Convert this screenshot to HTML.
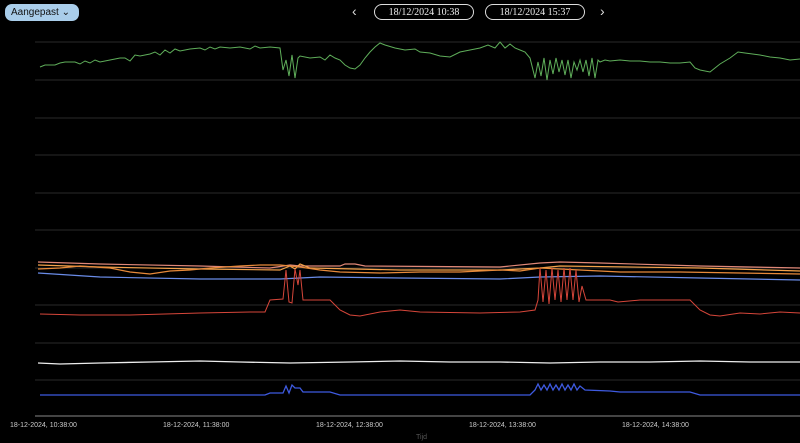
<!DOCTYPE html>
<html><head><meta charset="utf-8"><style>
body{margin:0;width:800px;height:443px;background:#000;overflow:hidden;font-family:"Liberation Sans",sans-serif;position:relative}
.btn{position:absolute;top:4px;left:5px;width:74px;height:17px;background:#a9cdea;border-radius:7px;font-size:10px;color:#111;line-height:17px;padding-left:6px;box-sizing:border-box}
.d{position:absolute;top:4px;height:16px;border:1.5px solid #ddd;border-radius:9px;color:#eee;font-family:"Liberation Serif",serif;font-size:10px;text-align:center;line-height:16px;box-sizing:border-box}
.ar{position:absolute;top:3px;color:#ddd;font-size:14px}
.x{position:absolute;top:422px;font-size:7px;color:#ccc}
</style></head><body>
<div class="btn">Aangepast &#8964;</div>
<div class="ar" style="left:352px">&#8249;</div>
<div class="d" style="left:374px;width:100px">18/12/2024 10:38</div>
<div class="d" style="left:485px;width:100px">18/12/2024 15:37</div>
<div class="ar" style="left:600px">&#8250;</div>
<svg width="800" height="443" style="position:absolute;left:0;top:0" fill="none">
<g stroke="#2a2a2a" stroke-width="1">
<line x1="35" y1="42" x2="800" y2="42"/><line x1="35" y1="80" x2="800" y2="80"/><line x1="35" y1="118" x2="800" y2="118"/><line x1="35" y1="155" x2="800" y2="155"/><line x1="35" y1="193" x2="800" y2="193"/><line x1="35" y1="230" x2="800" y2="230"/><line x1="35" y1="268" x2="800" y2="268"/><line x1="35" y1="305" x2="800" y2="305"/><line x1="35" y1="343" x2="800" y2="343"/><line x1="35" y1="380" x2="800" y2="380"/>
</g>
<line x1="35" y1="416" x2="800" y2="416" stroke="#888"/>
<polyline stroke="#5fae5a" stroke-width="1" points="40,67 45,65 55,65 60,63 65,62 75,62 80,64 85,61 90,63 95,60 100,62 110,60 120,58 125,58 130,61 135,55 140,56 150,54 155,52 160,55 165,50 170,53 175,49 180,51 190,49 200,48 205,50 210,47 215,49 220,47 230,48 240,47 250,49 255,46 260,48 270,47 280,48 283,70 286,60 289,76 292,55 295,78 298,58 300,56 310,58 320,57 325,60 330,55 335,58 340,60 345,65 350,68 355,69 360,65 365,58 370,52 375,47 380,43 385,45 395,48 405,50 415,49 420,52 430,53 440,56 450,57 460,52 470,50 480,48 488,45 495,48 500,42 505,48 510,44 515,48 520,50 525,52 530,58 535,78 538,62 541,76 544,58 547,80 550,60 553,74 556,58 559,72 562,60 565,75 568,60 571,78 574,62 577,70 580,60 583,72 586,60 589,76 592,58 595,78 598,60 600,62 605,60 610,61 620,60 630,61 640,61 650,62 660,62 670,63 680,63 690,62 695,68 700,70 710,72 715,68 720,64 730,58 738,52 745,53 760,55 770,57 780,58 790,60 800,59"/>
<polyline stroke="#e08878" stroke-width="1.2" points="38,262 100,264 200,266 270,268 290,265 300,266 340,266 345,264 355,264 365,266 500,267 540,263 560,262 600,263 700,266 800,268"/>
<polyline stroke="#f4a24a" stroke-width="1.2" points="38,265 100,267 200,269 280,270 290,266 295,269 300,264 310,268 400,270 500,270 540,268 560,266 700,268 800,271"/>
<polyline stroke="#e88a3a" stroke-width="1.2" points="38,269 60,268 80,266 110,268 130,272 150,274 170,271 190,270 210,268 240,266 260,265 280,265 300,267 320,270 340,272 380,273 420,272 460,272 500,270 520,271 540,268 580,270 620,272 680,272 740,273 800,274"/>
<polyline stroke="#6a8ce8" stroke-width="1.2" points="38,273 100,277 200,279 280,279 320,277 400,278 500,279 540,277 600,276 700,278 800,280"/>
<polyline stroke="#d6463a" stroke-width="1" points="40,314 80,315 130,315 200,313 250,312 265,312 270,300 283,299 286,270 289,302 292,303 295,269 298,285 300,270 303,300 330,300 340,310 350,315 360,316 380,312 400,310 420,312 480,313 520,312 535,310 538,300 540,268 543,302 546,270 549,304 552,268 555,300 558,270 561,302 564,268 567,300 570,268 573,300 576,270 579,302 582,286 586,300 610,300 618,302 640,300 690,300 700,310 710,315 720,316 740,313 760,314 780,312 800,313"/>
<polyline stroke="#eeeeee" stroke-width="1.3" points="38,363 60,364 100,363 150,362 200,361 240,362 290,363 350,362 400,361 450,362 500,362 550,363 600,362 650,362 700,361 750,362 800,362"/>
<polyline stroke="#3e5ae0" stroke-width="1.3" points="40,395 265,395 270,393 283,393 286,386 289,393 292,385 295,388 300,388 303,392 330,392 340,395 530,395 535,390 538,384 541,390 544,385 547,390 550,384 553,390 556,385 559,390 562,384 565,390 568,385 571,390 574,384 577,390 580,386 585,390 610,391 620,392 690,392 700,395 800,395"/>
</svg>
<div class="x" style="left:10px">18-12-2024, 10:38:00</div>
<div class="x" style="left:163px">18-12-2024, 11:38:00</div>
<div class="x" style="left:316px">18-12-2024, 12:38:00</div>
<div class="x" style="left:469px">18-12-2024, 13:38:00</div>
<div class="x" style="left:622px">18-12-2024, 14:38:00</div>
<div class="x" style="left:416px;top:434px;color:#555">Tijd</div>
</body></html>
